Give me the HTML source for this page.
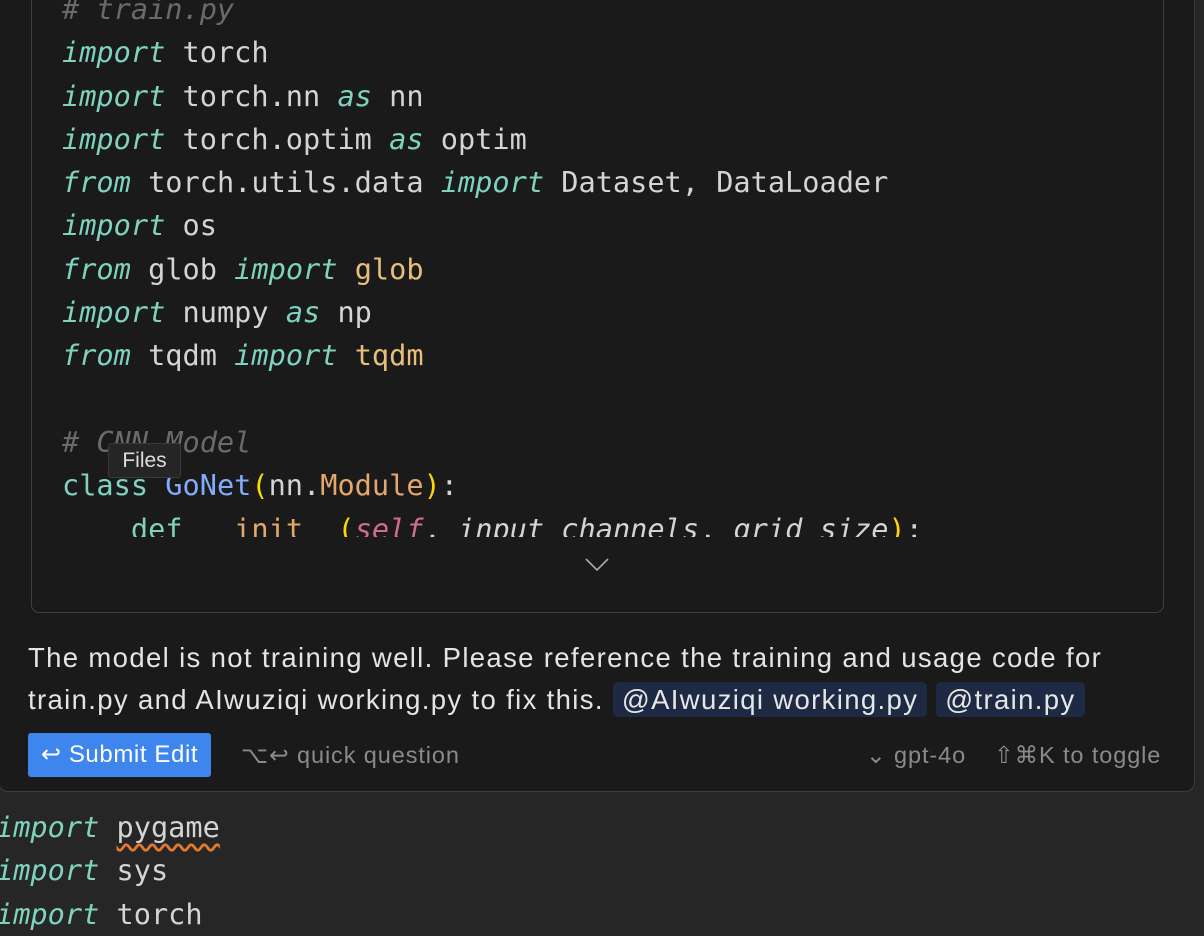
<!DOCTYPE html>
<html><head><style>
body{margin:0;width:1204px;height:918px;background:#262626;overflow:hidden;position:relative;font-family:"Liberation Sans",sans-serif}
.panel{position:absolute;left:-2px;top:-20px;width:1197px;height:812px;background:#1a1a1a;border:1px solid #3c3c3c;border-radius:10px;box-sizing:border-box}
.code{position:absolute;left:31px;top:-10px;width:1133px;height:623px;border:1px solid #3f3f3f;border-radius:8px;box-sizing:border-box;overflow:hidden}
.lines{position:absolute;left:30px;top:-3px;height:549px;overflow:hidden;width:1100px;font-family:"DejaVu Sans Mono","Liberation Mono",monospace;font-size:28.6px;line-height:43.3px;color:#d4d4d4;white-space:pre}
.k{color:#7fd3bd;font-style:italic}.c{color:#6a6a6a;font-style:italic}.y{color:#e6c07b}.b{color:#82aaff}.p{color:#ffd700}.o{color:#e5a76b}.s{color:#d16d8c;font-style:italic}.i{font-style:italic}.kc{color:#7fd3bd}
.tip{position:absolute;left:108px;top:443px;width:73px;height:35px;background:#252525;border:1px solid #3a3a3a;border-radius:3px;color:#ddd;font-size:21px;line-height:34px;text-align:center;box-sizing:border-box}
.msg{position:absolute;left:28px;top:637px;width:1160px;color:#e4e4e4;font-size:27.5px;letter-spacing:1.35px;line-height:42px;white-space:nowrap}
.tag{background:#1e2a44;border-radius:5px;padding:2px 9px;color:#e6e6e6}
.btn{position:absolute;left:28px;top:733px;width:183px;height:44px;background:#3e86ee;border-radius:3px;color:#fff;font-size:24px;letter-spacing:0.6px;line-height:44px;text-align:center}
.g{position:absolute;top:740px;color:#8a8a8a;font-size:23.5px;letter-spacing:0.9px;line-height:30px}
.bottom{position:absolute;left:-4px;top:806px;font-family:"DejaVu Sans Mono","Liberation Mono",monospace;font-size:28.6px;line-height:43.3px;color:#d4d4d4;white-space:pre}
.sq{text-decoration:underline wavy #e07a2f;text-underline-offset:6px}
</style></head><body>
<div class="panel"></div>
<div class="code">
<div class="lines"><span class="c"># train.py</span>
<span class="k">import</span> torch
<span class="k">import</span> torch.nn <span class="k">as</span> nn
<span class="k">import</span> torch.optim <span class="k">as</span> optim
<span class="k">from</span> torch.utils.data <span class="k">import</span> Dataset, DataLoader
<span class="k">import</span> os
<span class="k">from</span> glob <span class="k">import</span> <span class="y">glob</span>
<span class="k">import</span> numpy <span class="k">as</span> np
<span class="k">from</span> tqdm <span class="k">import</span> <span class="y">tqdm</span>

<span class="c"># CNN Model</span>
<span class="kc">class</span> <span class="b">GoNet</span><span class="p">(</span>nn.<span class="o">Module</span><span class="p">)</span>:
    <span class="kc">def</span> <span class="o">__init__</span><span class="p">(</span><span class="s">self</span>, <span class="i">input_channels</span>, <span class="i">grid_size</span><span class="p">)</span>:</div>
</div>
<svg style="position:absolute;left:585px;top:557px" width="25" height="15"><path d="M1 2 L12 13 L23 2" fill="none" stroke="#aaa" stroke-width="1.6"/></svg>
<div class="tip">Files</div>
<div class="msg">The model is not training well. Please reference the training and usage code for<br>train.py and AIwuziqi working.py to fix this. <span class="tag">@AIwuziqi working.py</span> <span class="tag">@train.py</span></div>
<div class="btn">↩ Submit Edit</div>
<div class="g" style="left:241px">⌥↩ quick question</div>
<div class="g" style="left:866px">⌄ gpt-4o</div>
<div class="g" style="left:994px">⇧⌘K to toggle</div>
<div class="bottom"><span class="k">import</span> <span class="sq">pygame</span>
<span class="k">import</span> sys
<span class="k">import</span> torch</div>
</body></html>
